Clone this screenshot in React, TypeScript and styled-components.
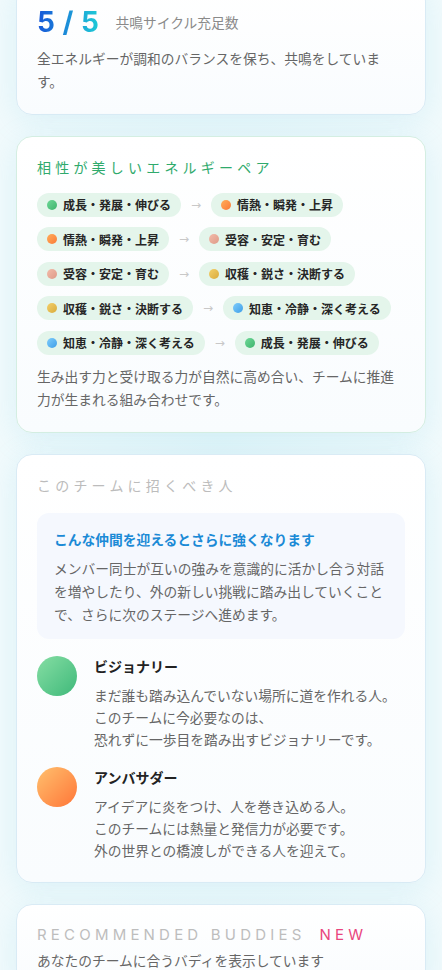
import React from "react";
import styled, { createGlobalStyle } from "styled-components";

const GlobalStyle = createGlobalStyle`
  html, body { margin: 0; padding: 0; }
  body {
    background: #f3fafc;
    font-family: "Noto Sans CJK JP", "Noto Sans", sans-serif;
    color: #666;
    -webkit-font-smoothing: antialiased;
  }
  * { box-sizing: border-box; }
`;

const Page = styled.main`
  display: flex;
  flex-direction: column;
  gap: 21px;
  padding: 0 16px 40px;
  overflow: hidden;
  background: radial-gradient(ellipse at 50% 45%, #e4f6fa 0%, #f1fafc 70%);
`;

const Card = styled.section<{ $border: string; $first?: boolean }>`
  margin-top: ${(p) => (p.$first ? "-15px" : "0")};
  border: 1px solid ${(p) => p.$border};
  border-radius: 16px;
  padding: 20px;
  background: linear-gradient(180deg, #ffffff 0%, #f9fcfe 100%);
  box-shadow: 0 6px 30px rgba(120, 205, 225, 0.18);
`;

const ScoreRow = styled.div`
  display: flex;
  align-items: center;
  gap: 16px;
`;

const Score = styled.span`
  font-family: "Inter", "Liberation Sans", sans-serif;
  font-weight: 700;
  font-size: 28px;
  line-height: 32px;
  letter-spacing: 0.5px;
  background: linear-gradient(90deg, #1656d8 0%, #1b8fd8 50%, #1ecbd6 100%);
  -webkit-background-clip: text;
  background-clip: text;
  color: transparent;
`;

const ScoreLabel = styled.span`
  font-size: 13.76px;
  color: #8a8a8a;
`;

const Body = styled.p<{ $mt?: number }>`
  margin: ${(p) => p.$mt ?? 0}px 0 0;
  font-size: 13.76px;
  line-height: 1.7;
  color: #666;
`;

const Title = styled.h2<{ $color: string }>`
  margin: 0;
  font-size: 14px;
  font-weight: 400;
  line-height: 20px;
  letter-spacing: 0.3em;
  color: ${(p) => p.$color};
`;

const PairList = styled.div`
  display: flex;
  flex-direction: column;
  gap: 10.5px;
  margin-top: 16px;
`;

const PairRow = styled.div`
  display: flex;
  align-items: center;
  gap: 8px;
`;

const Pill = styled.span`
  display: inline-flex;
  align-items: center;
  gap: 6px;
  height: 24px;
  padding: 0 10px;
  border-radius: 12px;
  background: #e4f5eb;
  font-size: 12px;
  font-weight: 700;
  color: #262626;
  white-space: nowrap;
`;

const Dot = styled.span<{ $from: string; $to: string }>`
  width: 10px;
  height: 10px;
  border-radius: 50%;
  background: linear-gradient(135deg, ${(p) => p.$from}, ${(p) => p.$to});
`;

const Arrow = styled.span`
  width: 14px;
  text-align: center;
  font-size: 12px;
  color: #c8c8c8;
  font-family: "DejaVu Sans", sans-serif;
`;

const InviteBox = styled.div`
  margin-top: 18px;
  border-radius: 12px;
  background: #f5f8fe;
  padding: 16px 16px 12px 17px;
`;

const InviteHeading = styled.h3`
  margin: 0;
  font-size: 13.76px;
  line-height: 20px;
  font-weight: 700;
  color: #1b8ad6;
`;

const MemberList = styled.div`
  display: flex;
  flex-direction: column;
  gap: 16px;
  margin-top: 17px;
`;

const Member = styled.div`
  display: flex;
  align-items: flex-start;
  gap: 17px;
`;

const Avatar = styled.div<{ $from: string; $to: string }>`
  flex: none;
  width: 40px;
  height: 40px;
  border-radius: 50%;
  background: linear-gradient(135deg, ${(p) => p.$from}, ${(p) => p.$to});
`;

const MemberName = styled.div`
  font-size: 14px;
  font-weight: 700;
  line-height: 20px;
  color: #222;
`;

const MemberDesc = styled.p`
  margin: 8px 0 0;
  font-size: 13.76px;
  line-height: 22.3px;
  color: #666;
`;

const BuddyTitle = styled.h2`
  margin: 0;
  font-family: "Inter", "Liberation Sans", sans-serif;
  font-size: 15px;
  font-weight: 400;
  line-height: 20px;
  letter-spacing: 0.28em;
  color: #bdbdbd;
`;

const NewTag = styled.span`
  margin-left: 14px;
  color: #e9457d;
`;

type Energy = { label: string; from: string; to: string };

const GROW: Energy = { label: "成長・発展・伸びる", from: "#6fd898", to: "#3db46c" };
const FIRE: Energy = { label: "情熱・瞬発・上昇", from: "#ffae5a", to: "#fb7a38" };
const ACCEPT: Energy = { label: "受容・安定・育む", from: "#f3bcaa", to: "#de9a88" };
const HARVEST: Energy = { label: "収穫・鋭さ・決断する", from: "#f3d06a", to: "#d9ab3c" };
const WISDOM: Energy = { label: "知恵・冷静・深く考える", from: "#80cdfb", to: "#3e9ee8" };

const pairs: [Energy, Energy][] = [
  [GROW, FIRE],
  [FIRE, ACCEPT],
  [ACCEPT, HARVEST],
  [HARVEST, WISDOM],
  [WISDOM, GROW],
];

const EnergyPill = ({ e }: { e: Energy }) => (
  <Pill>
    <Dot $from={e.from} $to={e.to} />
    {e.label}
  </Pill>
);

export default function App() {
  return (
    <>
      <GlobalStyle />
      <Page>
        <Card $border="#d9ebf5" $first>
          <ScoreRow>
            <Score>5 / 5</Score>
            <ScoreLabel>共鳴サイクル充足数</ScoreLabel>
          </ScoreRow>
          <Body $mt={9}>全エネルギーが調和のバランスを保ち、共鳴をしています。</Body>
        </Card>

        <Card $border="#d4eee2">
          <Title $color="#2faa6c">相性が美しいエネルギーペア</Title>
          <PairList>
            {pairs.map(([a, b], i) => (
              <PairRow key={i}>
                <EnergyPill e={a} />
                <Arrow>→</Arrow>
                <EnergyPill e={b} />
              </PairRow>
            ))}
          </PairList>
          <Body $mt={10}>
            生み出す力と受け取る力が自然に高め合い、チームに推進力が生まれる組み合わせです。
          </Body>
        </Card>

        <Card $border="#d9ebf5">
          <Title $color="#bcbcbc">このチームに招くべき人</Title>
          <InviteBox>
            <InviteHeading>こんな仲間を迎えるとさらに強くなります</InviteHeading>
            <Body $mt={8}>
              メンバー同士が互いの強みを意識的に活かし合う対話を増やしたり、外の新しい挑戦に踏み出していくことで、さらに次のステージへ進めます。
            </Body>
          </InviteBox>
          <MemberList>
            <Member>
              <Avatar $from="#86dea4" $to="#3fb97a" />
              <div>
                <MemberName>ビジョナリー</MemberName>
                <MemberDesc>
                  まだ誰も踏み込んでいない場所に道を作れる人。
                  <br />
                  このチームに今必要なのは、
                  <br />
                  恐れずに一歩目を踏み出すビジョナリーです。
                </MemberDesc>
              </div>
            </Member>
            <Member>
              <Avatar $from="#ffc06e" $to="#ff7638" />
              <div>
                <MemberName>アンバサダー</MemberName>
                <MemberDesc>
                  アイデアに炎をつけ、人を巻き込める人。
                  <br />
                  このチームには熱量と発信力が必要です。
                  <br />
                  外の世界との橋渡しができる人を迎えて。
                </MemberDesc>
              </div>
            </Member>
          </MemberList>
        </Card>

        <Card $border="#d9ebf5">
          <BuddyTitle>
            RECOMMENDED BUDDIES<NewTag>NEW</NewTag>
          </BuddyTitle>
          <Body $mt={4}>あなたのチームに合うバディを表示しています</Body>
        </Card>
      </Page>
    </>
  );
}
